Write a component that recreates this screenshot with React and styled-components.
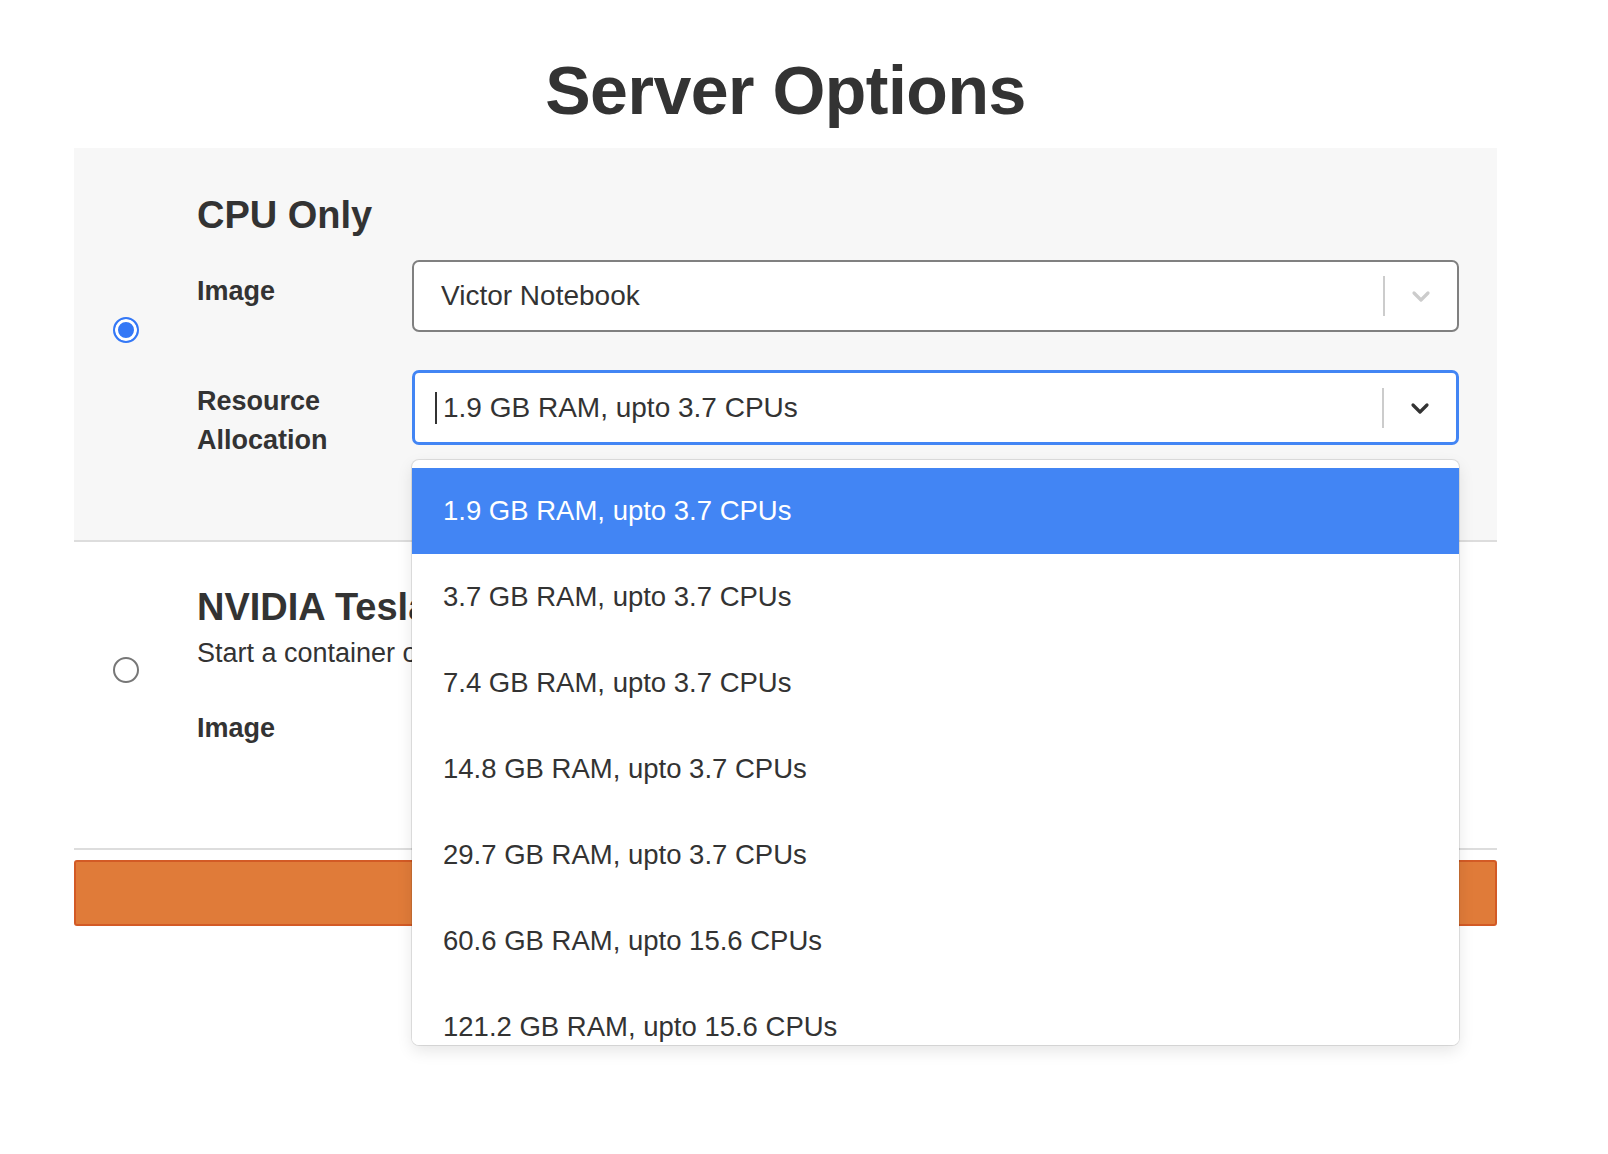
import styled, { createGlobalStyle } from "styled-components";

const Global = createGlobalStyle`
  html, body { margin: 0; background: #fff; font-family: "Liberation Sans", Arial, sans-serif; color: #333; }
`;

const options = [
  "1.9 GB RAM, upto 3.7 CPUs",
  "3.7 GB RAM, upto 3.7 CPUs",
  "7.4 GB RAM, upto 3.7 CPUs",
  "14.8 GB RAM, upto 3.7 CPUs",
  "29.7 GB RAM, upto 3.7 CPUs",
  "60.6 GB RAM, upto 15.6 CPUs",
  "121.2 GB RAM, upto 15.6 CPUs",
  "242.4 GB RAM, upto 15.6 CPUs",
];

const Chevron = ({ color }) => (
  <svg width="24" height="24" viewBox="0 0 24 24" fill="none" stroke={color} strokeWidth="3.2" strokeLinecap="round" strokeLinejoin="round">
    <path d="M5 9l7 7 7-7" />
  </svg>
);

const App = () => (
  <Page>
    <Global />
    <Title>Server Options</Title>
    <Option $active>
      <RadioCol><Radio $checked /></RadioCol>
      <Body>
        <Heading>CPU Only</Heading>
        <Row>
          <Label>Image</Label>
          <Select>
            <Value>Victor Notebook</Value>
            <Sep />
            <Arrow><Chevron color="#ccc" /></Arrow>
          </Select>
        </Row>
        <Row>
          <Label>Resource<br />Allocation</Label>
          <Field>
            <Select $focus>
              <Value><Caret />{options[0]}</Value>
              <Sep />
              <Arrow><Chevron color="#333" /></Arrow>
            </Select>
            <Menu>
              {options.map((o, i) => (
                <Item key={o} $selected={i === 0}>{o}</Item>
              ))}
            </Menu>
          </Field>
        </Row>
      </Body>
    </Option>
    <Option>
      <RadioCol><Radio /></RadioCol>
      <Body>
        <Heading>NVIDIA Tesla T4</Heading>
        <Desc>Start a container on a GPU node</Desc>
        <Row>
          <Label>Image</Label>
        </Row>
      </Body>
    </Option>
    <Start>Start</Start>
  </Page>
);

const Page = styled.div`
  width: 1423px;
  min-height: 1154px;
  box-sizing: border-box;
  margin: 0 0 0 74px;
  padding: 48px 0 0;
`;

const Title = styled.h1`
  margin: 0 0 16px;
  text-align: center;
  font-size: 68px;
  font-weight: 700;
  line-height: 84px;
  color: #333;
  letter-spacing: -0.5px;
`;

const Option = styled.div`
  display: flex;
  align-items: center;
  background: ${(p) => (p.$active ? "#f7f7f7" : "#fff")};
  border-bottom: 2px solid #ddd;
  padding: ${(p) => (p.$active ? "42px 38px 80px 0" : "40px 38px 100px 0")};
`;

const RadioCol = styled.div`
  width: 103px;
  display: flex;
  justify-content: center;
  padding-top: 10px;
`;

const Radio = styled.span`
  width: 26px;
  height: 26px;
  border-radius: 50%;
  box-sizing: border-box;
  border: 2px solid ${(p) => (p.$checked ? "#3478f6" : "#777")};
  background: ${(p) => (p.$checked ? "#3478f6" : "#fff")};
  box-shadow: ${(p) => (p.$checked ? "inset 0 0 0 3px #fff" : "none")};
`;

const Body = styled.div`
  flex: 1;
  padding-left: 20px;
`;

const Heading = styled.h2`
  margin: 0 0 20px;
  font-size: 38px;
  font-weight: 700;
  line-height: 50px;
`;

const Desc = styled.p`
  margin: -14px 0 28px;
  font-size: 27px;
`;

const Row = styled.div`
  display: flex;
  align-items: flex-start;
  margin-bottom: 38px;
  &:last-child { margin-bottom: 0; }
`;

const Label = styled.div`
  width: 215px;
  font-size: 27px;
  font-weight: 700;
  line-height: 39px;
  padding-top: 12px;
`;

const Field = styled.div`
  position: relative;
  flex: 1;
`;

const Select = styled.div`
  flex: 1;
  height: ${(p) => (p.$focus ? "75px" : "72px")};
  box-sizing: border-box;
  display: flex;
  align-items: center;
  background: #fff;
  border: ${(p) => (p.$focus ? "3px solid #4285f4" : "2px solid #808080")};
  border-radius: 7px;
  padding-left: ${(p) => (p.$focus ? "20px" : "27px")};
  font-size: 28px;
`;

const Value = styled.div`
  flex: 1;
  display: flex;
  align-items: center;
`;

const Caret = styled.span`
  width: 2px;
  height: 32px;
  background: #333;
  margin-right: 6px;
`;

const Sep = styled.div`
  width: 2px;
  height: 40px;
  background: #ccc;
`;

const Arrow = styled.div`
  width: 72px;
  display: flex;
  justify-content: center;
`;

const Menu = styled.div`
  position: absolute;
  top: 90px;
  left: 0;
  right: 0;
  height: 585px;
  overflow: hidden;
  background: #fff;
  border-radius: 7px;
  box-shadow: 0 0 0 1px rgba(0, 0, 0, 0.1), 0 6px 16px rgba(0, 0, 0, 0.1);
  padding-top: 8px;
  box-sizing: border-box;
  z-index: 2;
`;

const Item = styled.div`
  height: 86px;
  flex-shrink: 0;
  display: flex;
  align-items: center;
  padding-left: 31px;
  font-size: 27.5px;
  background: ${(p) => (p.$selected ? "#4285f4" : "#fff")};
  color: ${(p) => (p.$selected ? "#fff" : "#333")};
`;

const Start = styled.button`
  display: block;
  width: 100%;
  height: 66px;
  margin-top: 10px;
  background: #e07b39;
  border: 2px solid #d35a25;
  border-radius: 3px;
  color: #fff;
  font-family: inherit;
  font-size: 26px;
`;

export default App;
